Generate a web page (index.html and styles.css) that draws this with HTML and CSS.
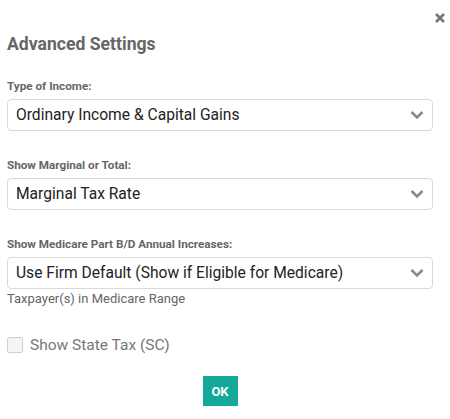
FILE: index.html
```html
<!DOCTYPE html>
<html>
<head>
<meta charset="utf-8">
<link rel="stylesheet" href="styles.css">
</head>
<body>
<div class="dialog">
  <button class="close" aria-label="Close"><svg viewBox="0 0 12 12" width="12" height="12"><path d="M2 2 L10 10 M10 2 L2 10" stroke="#777" stroke-width="2.6" fill="none"/></svg></button>
  <h1 class="title">Advanced Settings</h1>

  <div class="field first">
    <label class="label">Type of Income:</label>
    <div class="select"><span>Ordinary Income &amp; Capital Gains</span>
      <svg class="chev" viewBox="0 0 14 10" width="14" height="10"><path d="M1.5 2 L7 7.5 L12.5 2" fill="none" stroke="#8a8a8a" stroke-width="2.6"/></svg>
    </div>
  </div>

  <div class="field">
    <label class="label">Show Marginal or Total:</label>
    <div class="select"><span>Marginal Tax Rate</span>
      <svg class="chev" viewBox="0 0 14 10" width="14" height="10"><path d="M1.5 2 L7 7.5 L12.5 2" fill="none" stroke="#8a8a8a" stroke-width="2.6"/></svg>
    </div>
  </div>

  <div class="field">
    <label class="label">Show Medicare Part B/D Annual Increases:</label>
    <div class="select"><span>Use Firm Default (Show if Eligible for Medicare)</span>
      <svg class="chev" viewBox="0 0 14 10" width="14" height="10"><path d="M1.5 2 L7 7.5 L12.5 2" fill="none" stroke="#8a8a8a" stroke-width="2.6"/></svg>
    </div>
    <div class="hint">Taxpayer(s) in Medicare Range</div>
  </div>

  <label class="check"><span class="box"></span><span>Show State Tax (SC)</span></label>

  <div class="actions"><button class="ok">OK</button></div>
</div>
</body>
</html>
```

FILE: styles.css
```css
html, body {
  margin: 0;
  padding: 0;
  background: #ffffff;
}
body {
  font-family: Roboto, "Liberation Sans", sans-serif;
  color: #333;
}
.dialog {
  position: relative;
  width: 450px;
  height: 419px;
  box-sizing: border-box;
  padding: 33px 17px 0 7px;
}
.close {
  position: absolute;
  top: 12px;
  right: 4px;
  border: 0;
  background: none;
  padding: 0;
  line-height: 0;
}
.close svg {
  display: block;
}
.title {
  margin: 0;
  font-size: 17.6px;
  line-height: 22px;
  font-weight: 700;
  color: #666;
}
.field {
  display: flex;
  flex-direction: column;
  margin-top: 28px;
}
.field.first {
  margin-top: 25px;
}
.label {
  font-size: 11.7px;
  font-weight: 700;
  line-height: 13px;
  color: #666;
  margin-bottom: 6px;
}
.select {
  height: 32px;
  box-sizing: border-box;
  border: 1px solid #d9d9d9;
  border-radius: 4px;
  display: flex;
  align-items: center;
  justify-content: space-between;
  padding: 0 8px 0 8px;
  font-size: 15.6px;
  color: #222;
}
.chev {
  display: block;
}
.hint {
  margin-top: 2px;
  font-size: 13px;
  line-height: 16px;
  color: #666;
}
.check {
  display: flex;
  align-items: center;
  gap: 7px;
  margin-top: 29px;
  font-size: 15.5px;
  color: #777;
}
.box {
  width: 14px;
  height: 14px;
  border: 1px solid #cfcfcf;
  border-radius: 2px;
  background: #f5f5f5;
}
.actions {
  display: flex;
  justify-content: center;
  margin-top: 22px;
}
.ok {
  width: 35px;
  height: 30px;
  border: 0;
  border-radius: 0;
  background: #14a89a;
  color: #fff;
  font-family: Roboto, "Liberation Sans", sans-serif;
  font-weight: 700;
  font-size: 13px;
  padding: 0;
}
```
